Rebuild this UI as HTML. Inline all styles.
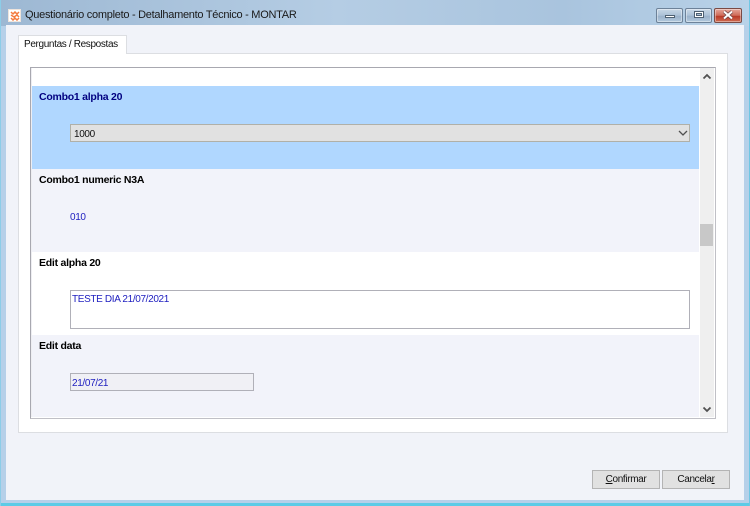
<!DOCTYPE html>
<html><head><meta charset="utf-8">
<style>
html,body{margin:0;padding:0;width:750px;height:506px;overflow:hidden;background:#b6d0e9}
body{position:relative;font-family:"Liberation Sans",sans-serif;font-size:10px;color:#000}
div{position:absolute;box-sizing:border-box}
.t{white-space:nowrap;line-height:14px;height:14px}
.b{font-weight:bold;font-size:10.5px;letter-spacing:-.25px}
.s{font-size:10px;letter-spacing:-.35px}
.v{color:#2020c0}
.btn{background:#e1e1e1;border:1px solid #b4b4b4;height:19px;top:470px;text-align:center;line-height:17px;font-size:10px;letter-spacing:-.35px;color:#111}
.wb{top:8px;height:15px;border:1px solid #6d8299;border-radius:2px;box-shadow:inset 0 0 0 1px rgba(255,255,255,.4)}
</style></head><body>
<div style="left:0;top:0;width:750px;height:26px;background:linear-gradient(90deg,#9db8d3 0,#b5cde4 45%,#a9c4de 75%,#b9d2e8 100%)"></div>
<div style="left:0;top:503px;width:750px;height:3px;background:#5ccbe6"></div>
<div style="left:0;top:0;width:1px;height:506px;background:#8ccde8"></div>
<div style="left:749px;top:0;width:1px;height:506px;background:#6fc7e4"></div>

<!-- client -->
<div style="left:6px;top:25px;width:738px;height:475px;background:#f1f3f9"></div>

<!-- title icon -->
<div style="left:8px;top:9px;width:13px;height:13px;background:#fff;border:1px solid #eee4dc"></div>
<svg style="position:absolute;left:10px;top:11px" width="10" height="10"><path d="M1 1l2 2 2-2 2 2 2-2M1 4l3 2 3-2 2 2M1 7l2 2 2-2 2 2 2-2" fill="none" stroke="#f47a3e" stroke-width="1.500"/></svg>
<div class="t" style="left:25px;top:8px;font-size:11px;color:#1a1a1a;letter-spacing:-.28px;line-height:15px">Questionário completo - Detalhamento Técnico - MONTAR</div>

<!-- window buttons -->
<div class="wb" style="left:656px;width:27px;background:linear-gradient(#c9d8e7,#abc1d7 50%,#9ab2cb 55%,#b2c9de)"></div>
<div style="left:665px;top:15px;width:10px;height:3px;background:#fff;border:1px solid #4e6072"></div>
<div class="wb" style="left:685px;width:27px;background:linear-gradient(#c9d8e7,#abc1d7 50%,#9ab2cb 55%,#b2c9de)"></div>
<div style="left:694px;top:11px;width:10px;height:7px;background:#fff;border:1px solid #4e6072"></div>
<div style="left:696px;top:13px;width:6px;height:3px;background:#a9bfd5;border:1px solid #4e6072"></div>
<div class="wb" style="left:714px;width:28px;background:linear-gradient(#e5a79b,#cf6b58 50%,#b93a28 55%,#cf6a50);border-color:#7a4a44"></div>
<svg style="position:absolute;left:722px;top:10px" width="12" height="10"><path d="M2 1.500l8 7M10 1.500l-8 7" stroke="#6a4040" stroke-width="3.400"/><path d="M2 1.500l8 7M10 1.500l-8 7" stroke="#fff" stroke-width="2"/></svg>

<!-- tab panel -->
<div style="left:18px;top:53px;width:710px;height:380px;background:#fff;border:1px solid #dcdee2"></div>
<div style="left:18px;top:35px;width:109px;height:19px;background:#fff;border:1px solid #dcdee2;border-bottom:none"></div>
<div class="t s" style="left:24px;top:38px;color:#111">Perguntas / Respostas</div>

<!-- list -->
<div style="left:30px;top:67px;width:686px;height:352px;border:1px solid #a8a8b0;border-right-color:#c0c0c6;border-bottom-color:#c0c0c6;background:#fff"></div>
<div style="left:32px;top:86px;width:667px;height:83px;background:#b0d7ff"></div>
<div style="left:32px;top:169px;width:667px;height:83px;background:#f2f3fa"></div>
<div style="left:32px;top:335px;width:667px;height:82px;background:#f2f3fa"></div>
<div style="left:31px;top:68px;width:1px;height:349px;background:#eeeef2"></div>

<!-- scrollbar -->
<div style="left:700px;top:68px;width:14px;height:349px;background:#efefef"></div>
<div style="left:700px;top:224px;width:13px;height:22px;background:#c8c8c8"></div>
<svg style="position:absolute;left:702px;top:73px" width="10" height="8"><path d="M1.500 5.500l3.500-3.500 3.500 3.500" fill="none" stroke="#505050" stroke-width="1.800"/></svg>
<svg style="position:absolute;left:702px;top:405px" width="10" height="8"><path d="M1.500 2.500l3.500 3.500 3.500-3.500" fill="none" stroke="#505050" stroke-width="1.800"/></svg>

<!-- row 1 -->
<div class="t b" style="left:39px;top:90px;color:#000080">Combo1 alpha 20</div>
<div style="left:70px;top:124px;width:620px;height:18px;background:#e1e1e1;border:1px solid #b0b0a8"></div>
<div class="t s" style="left:74px;top:128px;color:#111">1000</div>
<svg style="position:absolute;left:678px;top:130px" width="10" height="7"><path d="M1 1l4 4 4-4" fill="none" stroke="#505050" stroke-width="1.300"/></svg>

<!-- row 2 -->
<div class="t b" style="left:39px;top:173px">Combo1 numeric N3A</div>
<div class="t v s" style="left:70px;top:211px">010</div>

<!-- row 3 -->
<div class="t b" style="left:39px;top:256px">Edit alpha 20</div>
<div style="left:70px;top:290px;width:620px;height:39px;background:#fff;border:1px solid #b0b0b8"></div>
<div class="t v s" style="left:72px;top:293px">TESTE DIA 21/07/2021</div>

<!-- row 4 -->
<div class="t b" style="left:39px;top:339px">Edit data</div>
<div style="left:70px;top:373px;width:184px;height:18px;background:#f0f0f5;border:1px solid #b0b0b8"></div>
<div class="t v s" style="left:72px;top:377px">21/07/21</div>

<!-- buttons -->
<div class="btn" style="left:592px;width:68px"><u>C</u>onfirmar</div>
<div class="btn" style="left:662px;width:68px">Cancela<u>r</u></div>
</body></html>
